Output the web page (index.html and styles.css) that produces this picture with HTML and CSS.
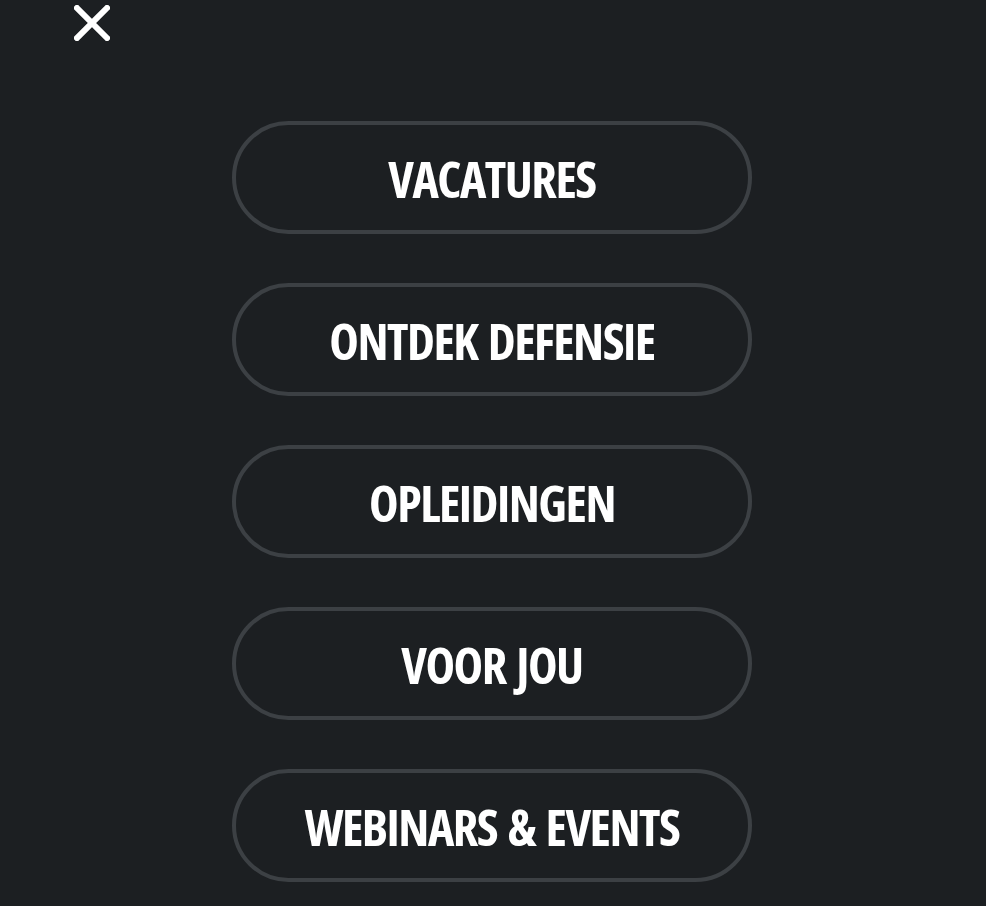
FILE: index.html
```html
<!DOCTYPE html>
<html lang="nl">
<head>
<meta charset="utf-8">
<title>Menu</title>
<link rel="stylesheet" href="styles.css">
</head>
<body>
<div class="menu">
  <header class="menu-header">
    <button class="close" aria-label="Sluiten">
      <svg width="36" height="36" viewBox="0 0 36 36"><path d="M3 3 L33 33 M33 3 L3 33" stroke="#fff" stroke-width="6" stroke-linecap="square" fill="none"/></svg>
    </button>
  </header>
  <nav class="menu-nav">
    <a class="pill" href="#">VACATURES</a>
    <a class="pill" href="#">ONTDEK DEFENSIE</a>
    <a class="pill" href="#">OPLEIDINGEN</a>
    <a class="pill" href="#">VOOR JOU</a>
    <a class="pill" href="#">WEBINARS &amp; EVENTS</a>
  </nav>
</div>
</body>
</html>
```
FILE: styles.css
```css
html, body {
  margin: 0;
  padding: 0;
  background: #1c1f22;
  height: 100%;
}
.menu {
  min-height: 906px;
  background: #1c1f22;
}
.menu-header {
  height: 121px;
  padding-left: 74px;
  padding-top: 5px;
  box-sizing: border-box;
}
.close {
  display: block;
  width: 36px;
  height: 36px;
  padding: 0;
  margin: 0;
  border: 0;
  background: none;
}
.close svg { display: block; }
.menu-nav {
  display: flex;
  flex-direction: column;
  align-items: center;
  gap: 49px;
  padding-right: 2px;
}
.pill {
  box-sizing: border-box;
  width: 520px;
  height: 113px;
  border: 4px solid #3c4044;
  border-radius: 57px;
  display: flex;
  align-items: center;
  justify-content: center;
  color: #ffffff;
  text-decoration: none;
  font-family: "Open Sans", "DejaVu Sans", sans-serif;
  font-weight: 700;
  font-stretch: 75%;
  font-size: 50px;
  letter-spacing: -1.5px;
  word-spacing: 3px;
  padding-top: 2px;
}
```
